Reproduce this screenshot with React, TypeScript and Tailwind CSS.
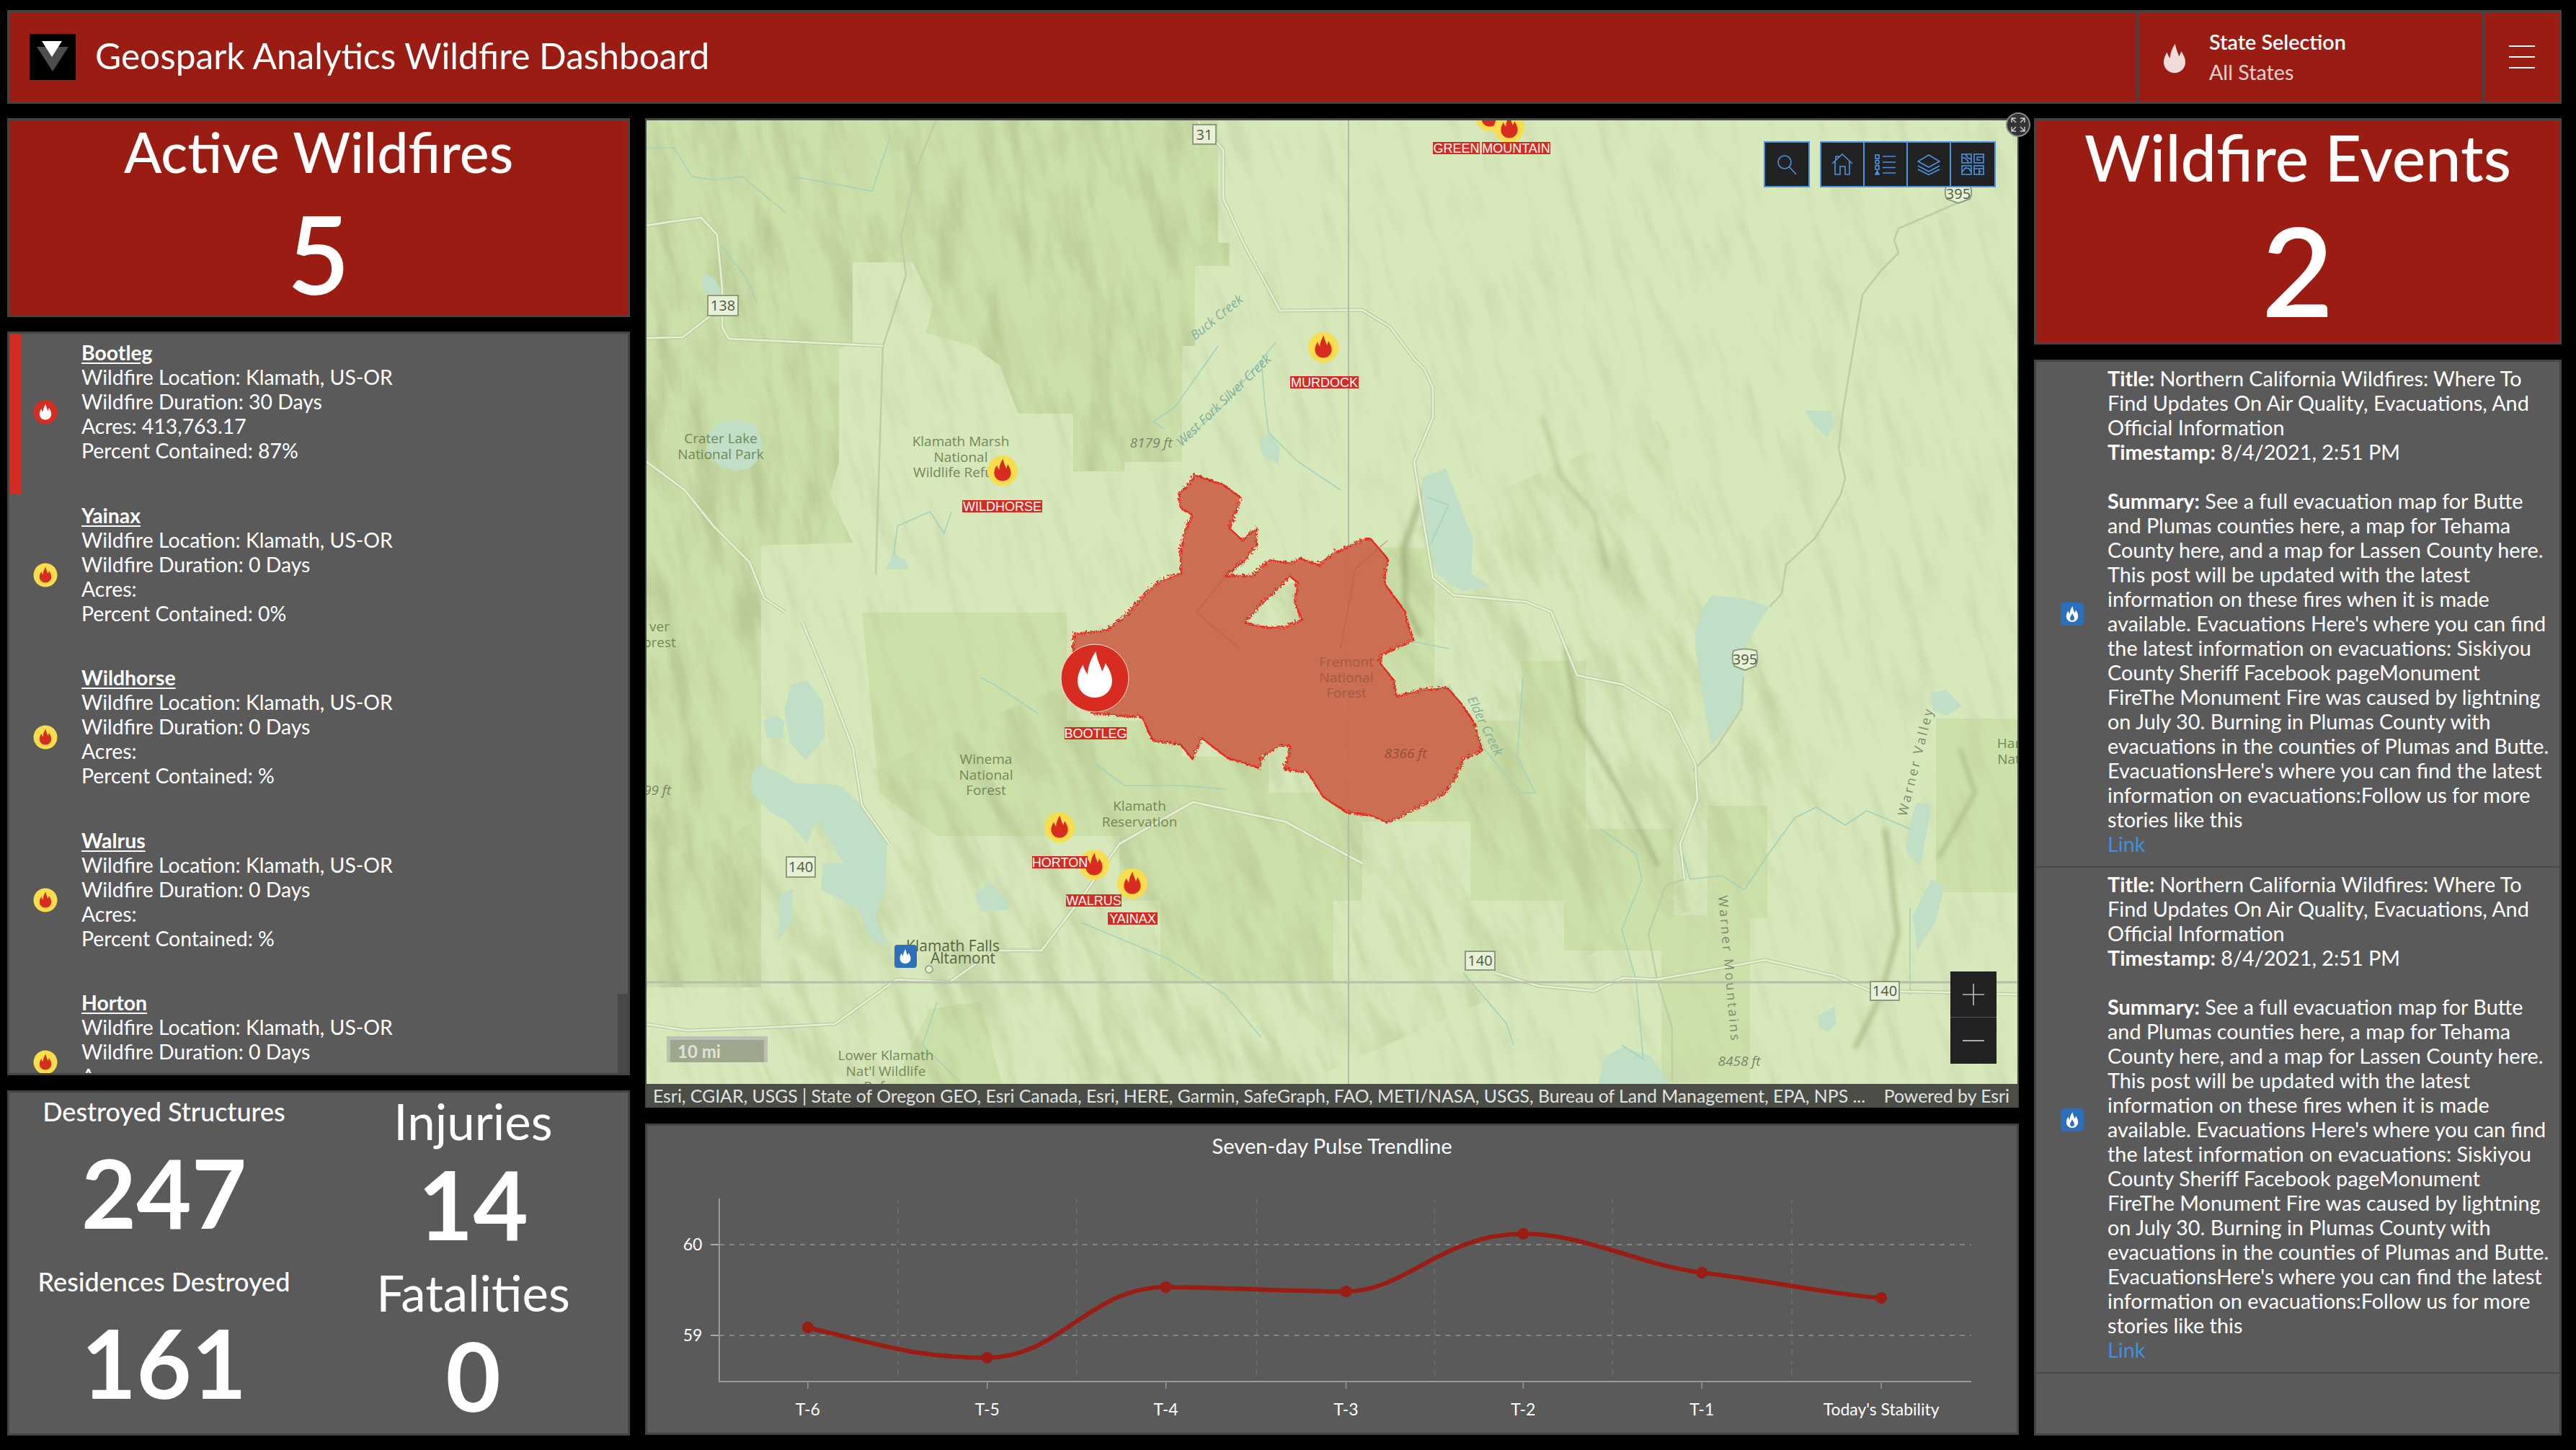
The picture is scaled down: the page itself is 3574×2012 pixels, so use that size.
import React from "react";

const FLAME =
  "M12.5 1 C13 5 14.5 7.5 15.5 10.5 C16.2 9.2 16.6 8 17 6.5 C19 9.5 20.2 12 20.2 15 C20.2 19.6 16.5 23 12 23 C7.5 23 3.8 19.6 3.8 15 C3.8 12 5 9.6 6.4 7.4 C6.8 9 7.4 10.6 8.6 11.8 C8.8 8 10 4.5 12.5 1 Z";

function Flame({ x, y, s, fill }: { x: number; y: number; s: number; fill: string }) {
  return <path d={FLAME} fill={fill} transform={`translate(${x - s / 2} ${y - s / 2}) scale(${s / 24})`} />;
}

function Marker({ x, y }: { x: number; y: number }) {
  return (
    <g>
      <circle cx={x} cy={y} r={21} fill="#f9dd4c" />
      <Flame x={x} y={y - 1} s={34} fill="#d92c20" />
    </g>
  );
}

function Tag({ x, y, w, t }: { x: number; y: number; w: number; t: string }) {
  return (
    <g>
      <rect x={x} y={y} width={w} height={17} fill="#d62b20" />
      <text x={x + w / 2} y={y + 14.5} textAnchor="middle" fontSize={18} fill="#fff" fontFamily="'Liberation Sans',sans-serif">
        {t}
      </text>
    </g>
  );
}

function Shield({ x, y, w, h, t, us }: { x: number; y: number; w: number; h: number; t: string; us?: boolean }) {
  return (
    <g>
      {us ? (
        <path
          d={`M${x + 3} ${y + 3} Q${x + w / 2} ${y - 2} ${x + w - 3} ${y + 3} Q${x + w} ${y + h * 0.5} ${x + w - 4} ${y + h - 6} Q${x + w * 0.7} ${y + h - 3} ${x + w / 2} ${y + h} Q${x + w * 0.3} ${y + h - 3} ${x + 4} ${y + h - 6} Q${x} ${y + h * 0.5} ${x + 3} ${y + 3} Z`}
          fill="#e8f0d8"
          stroke="#8e9c7c"
          strokeWidth={2}
        />
      ) : (
        <rect x={x} y={y} width={w} height={h} fill="#e8f0d8" stroke="#8e9c7c" strokeWidth={2} />
      )}
      <text x={x + w / 2} y={y + h / 2 + 7} textAnchor="middle" fontSize={20} fill="#4c5a3e" fontFamily="'Open Sans',sans-serif">
        {t}
      </text>
    </g>
  );
}

function Place({ x, y, lines, fill = "#74875a", size = 19, gap = 21.5 }: { x: number; y: number; lines: string[]; fill?: string; size?: number; gap?: number }) {
  return (
    <text textAnchor="middle" fontSize={size} fill={fill} fontFamily="'Open Sans',sans-serif">
      {lines.map((l, i) => (
        <tspan key={i} x={x} y={y + i * gap}>
          {l}
        </tspan>
      ))}
    </text>
  );
}

function Slanted({ x, y, r, t, fill = "#7fb0a0", size = 18, italic = true, spacing = 0 }: { x: number; y: number; r: number; t: string; fill?: string; size?: number; italic?: boolean; spacing?: number }) {
  return (
    <text
      transform={`translate(${x} ${y}) rotate(${r})`}
      textAnchor="middle"
      fontSize={size}
      fill={fill}
      fontStyle={italic ? "italic" : "normal"}
      letterSpacing={spacing}
      fontFamily="'Open Sans',sans-serif"
    >
      {t}
    </text>
  );
}

const lakes = [
  "M1000 586 L1025 582 L1048 590 L1058 612 L1056 634 L1040 650 L1020 654 L998 646 L980 628 L982 602 Z",
  "M973 378 L990 385 L1002 405 L1000 422 L985 415 L975 400 Z",
  "M1228 790 L1240 768 L1258 778 L1260 790 Z",
  "M1748 612 L1762 601 L1776 622 L1774 645 L1762 638 L1750 628 Z",
  "M1043 1073 L1056 1060 L1107 1087 L1164 1089 L1196 1118 L1231 1167 L1228 1234 L1215 1274 L1234 1314 L1209 1305 L1190 1261 L1139 1234 L1142 1198 L1171 1198 L1132 1136 L1120 1171 L1094 1140 L1069 1127 L1043 1100 Z",
  "M1098 950 L1120 944 L1142 975 L1145 1022 L1118 1055 L1096 1030 L1088 985 Z",
  "M1059 1000 L1075 993 L1088 1000 L1086 1024 L1064 1024 Z",
  "M1352 1240 L1375 1225 L1398 1250 L1400 1262 L1362 1265 Z",
  "M1082 1240 L1100 1234 L1098 1280 L1080 1305 Z",
  "M1973 663 L2006 650 L2044 748 L2041 797 L2067 813 L2029 820 L1994 797 L1973 721 Z",
  "M2375 826 L2422 831 L2455 842 L2430 880 L2419 904 L2419 979 L2395 1012 L2375 1033 L2368 1000 L2352 900 L2352 877 L2362 845 Z",
  "M2504 570 L2540 570 L2545 590 L2535 607 L2518 590 Z",
  "M2678 962 L2700 957 L2722 980 L2700 993 L2682 985 Z",
  "M2660 1113 L2680 1118 L2670 1170 L2665 1203 L2645 1180 L2650 1140 Z",
  "M2680 1220 L2698 1230 L2685 1280 L2660 1319 L2654 1270 Z",
  "M2217 1504 L2228 1465 L2252 1453 L2290 1465 L2317 1504 Z",
  "M2522 1410 L2545 1397 L2548 1420 L2535 1432 L2524 1425 Z",
];

const roads = [
  "M896 313 L928 308 L973 302 L995 326 L1002 400 L1002 454 L1011 470 L1225 480",
  "M896 469 L947 468 L986 438",
  "M1662 168 L1697 208 L1697 275 L1725 337 L1776 431 L1890 430 L1929 454 L1962 498 L1976 512 L1988 538 L1988 579 L1962 641 L1973 712 L1988 802 L2017 826 L2117 835 L2152 849 L2188 937 L2252 950 L2317 988 L2352 1060 L2355 1109 L2331 1171 L2337 1220",
  "M2074 1350 L2135 1368 L2211 1375 L2252 1357 L2299 1359 L2449 1332 L2545 1354 L2595 1375 L2704 1377 L2801 1380",
  "M1890 1198 L1783 1140 L1655 1113 L1553 1171 L1496 1252 L1445 1319 L1381 1319 L1317 1363 L1244 1359 L1158 1421 L1056 1426 L954 1430 L896 1421",
  "M1113 863 L1145 939 L1183 1037 L1196 1118 L1234 1171",
  "M896 640 L950 680 L990 730 L1040 780 L1060 830 L1090 850",
];

const thinRoads = [
  "M1298 168 L1273 230 L1250 329 L1257 382 L1225 480 L1215 797",
  "M2722 279 L2634 317 L2628 333 L2634 351 L2610 375 L2584 409 L2557 570 L2551 623 L2560 663 L2554 686 L2519 746 L2478 784 L2472 824 L2455 842",
  "M2419 939 L2416 984 L2381 1037 L2349 1069",
  "M2337 1220 L2311 1229 L2287 1296 L2299 1359 L2320 1426 L2320 1502",
];

const rivers = [
  "M895 205 L935 205 L960 245 L990 250 L1030 245 L1090 295",
  "M1100 245 L1210 265 L1235 190",
  "M1000 340 L1035 385 L1050 420",
  "M1690 480 L1630 565 L1600 585 L1615 595",
  "M1640 615 L1700 560 L1770 475",
  "M1750 500 L1755 560 L1760 600 L1800 640 L1860 680",
  "M1245 730 L1290 710 L1310 740 L1320 710 M1245 730 L1240 770",
  "M1520 1060 L1560 1090 L1640 1090 L1700 1095 M1440 990 L1380 950 L1360 940",
  "M2010 950 L2060 1040 L2110 1100 L2130 1100 L2105 1050 L2113 940",
  "M1960 890 L2010 900",
  "M2220 1150 L2270 1185 L2278 1220 L2250 1290 L2270 1360 L2280 1470 L2250 1450",
  "M2330 1170 L2345 1220 L2390 1215 L2420 1235",
  "M2420 1235 L2450 1190 L2490 1135 L2520 1120 L2560 1145 L2590 1125 L2650 1150",
  "M2650 1380 L2650 1260",
  "M1980 690 L2008 700 M2010 700 L1985 755",
  "M1500 1280 L1620 1330 L1700 1380 L1750 1440 M1300 1390 L1280 1450 L1330 1500",
  "M2030 1350 L2090 1420 L2100 1450",
];

function MapCanvas() {
  return (
    <svg viewBox="897 167 1902 1337" className="w-full flex-1 block" preserveAspectRatio="none">
      <defs>
        <filter id="hill" x="0" y="0" width="1" height="1">
          <feTurbulence type="fractalNoise" baseFrequency="0.03 0.007" numOctaves={5} seed={7} />
          <feColorMatrix values="0 0 0 0 0.38  0 0 0 0 0.46  0 0 0 0 0.2  3.2 0 0 0 -1.5" />
          <feGaussianBlur stdDeviation="1" />
        </filter>
        <filter id="hillLight" x="0" y="0" width="1" height="1">
          <feTurbulence type="fractalNoise" baseFrequency="0.045 0.009" numOctaves={4} seed={19} />
          <feColorMatrix values="0 0 0 0 0.5  0 0 0 0 0.58  0 0 0 0 0.32  3 0 0 0 -1.45" />
          <feGaussianBlur stdDeviation="1" />
        </filter>
        <filter id="soft">
          <feGaussianBlur stdDeviation="3" />
        </filter>
        <filter id="jag" x="-5%" y="-5%" width="110%" height="110%">
          <feTurbulence type="turbulence" baseFrequency="0.22" numOctaves={2} seed={4} />
          <feDisplacementMap in="SourceGraphic" scale="8" />
        </filter>
        <clipPath id="westClip">
          <path d="M895 164 H1690 V337 H1706 V369 H1658 V480 H1640 V641 H1560 V654 H1489 V574 H1413 L1387 507 L1349 480 L1285 462 L1295 422 L1266 364 H1183 V476 L1164 485 V641 L1151 686 L1183 753 L1056 757 V1370 H895 Z" />
        </clipPath>
      </defs>

      <rect x="895" y="164" width="1906" height="1340" fill="#d7e8bb" />

      <g fill="#cce0aa">
        <path d="M895 164 H1690 V337 H1706 V369 H1658 V480 H1640 V641 H1560 V654 H1489 V574 H1413 L1387 507 L1349 480 L1285 462 L1295 422 L1266 364 H1183 V476 L1164 485 V641 L1151 686 L1183 753 L1056 757 V1370 H895 Z" />
        <path d="M1196 850 H1480 V1000 H1640 V1050 H1760 V1100 H1890 V1250 H1850 V1363 H1610 V1250 H1553 V1160 H1300 L1220 1100 Z" />
        <path d="M1890 760 H1990 V1000 H2111 V917 H2200 V1150 H2322 V1319 H2170 V1250 H2040 V1140 H1890 Z" />
        <path d="M2369 1118 H2452 V1274 H2428 V1502 H2305 V1270 H2369 Z" />
        <path d="M2686 997 H2801 V1238 H2686 Z" />
        <path d="M1290 1400 L1360 1390 L1390 1504 H1240 Z" />
      </g>

      <g transform="rotate(-16 1850 830)">
        <rect x="500" y="-200" width="2700" height="2100" filter="url(#hillLight)" opacity="0.3" />
      </g>
      <g clipPath="url(#westClip)">
        <g transform="rotate(-8 1300 700)">
          <rect x="760" y="40" width="1100" height="1500" filter="url(#hill)" opacity="0.42" />
        </g>
      </g>
      <g transform="rotate(-24 1700 1200)" opacity="0.3">
        <rect x="1000" y="880" width="1500" height="640" filter="url(#hill)" />
      </g>
      <rect x="895" y="1504" width="1906" height="300" fill="#000" opacity="0" />

      <g fill="none" stroke="#8d9e66" strokeLinecap="round" filter="url(#soft)" opacity="0.5">
        <path d="M2140 578 L2165 660 L2211 712 L2230 790" strokeWidth="4" />
        <path d="M1975 680 L1948 760 L1950 840 L1970 880" strokeWidth="9" />
        <path d="M2616 1153 L2633 1296 L2610 1380 L2575 1452" strokeWidth="7" />
        <path d="M2172 900 L2190 1000 L2250 1100 L2300 1200" strokeWidth="7" />
        <path d="M2690 1190 L2740 1100 L2720 1040" strokeWidth="5" />
      </g>

      <g fill="#c0dfc6">
        {lakes.map((d) => (
          <path key={d} d={d} />
        ))}
      </g>
      <g fill="none" stroke="#a2d2bb" strokeWidth="1.6">
        {rivers.map((d) => (
          <path key={d} d={d} />
        ))}
      </g>
      <g fill="none" strokeLinejoin="round">
        {thinRoads.map((d) => (
          <path key={d} d={d} stroke="#bfcda6" strokeWidth="2.5" />
        ))}
        {roads.map((d) => (
          <path key={d} d={d} stroke="#bccaa2" strokeWidth="5" />
        ))}
        {roads.map((d) => (
          <path key={d + "i"} d={d} stroke="#e8f0d4" strokeWidth="2.6" />
        ))}
      </g>

      <path d="M1871 164 V1504" stroke="#b3baa7" strokeWidth="2" />
      <path d="M895 1363 H2801" stroke="#b9bdae" strokeWidth="3" />

      <Shield x={1655} y={173} w={32} h={27} t="31" />
      <Shield x={982} y={410} w={42} h={28} t="138" />
      <Shield x={2697} y={256} w={40} h={26} t="395" us />
      <Shield x={1091} y={1189} w={40} h={28} t="140" />
      <Shield x={2033} y={1320} w={41} h={26} t="140" />
      <Shield x={2402} y={900} w={38} h={30} t="395" us />
      <Shield x={2595} y={1362} w={40} h={26} t="140" />

      <Place x={1000} y={615} lines={["Crater Lake", "National Park"]} />
      <Place x={1333} y={619} lines={["Klamath Marsh", "National", "Wildlife Refuge"]} />
      <Place x={1368} y={1060} lines={["Winema", "National", "Forest"]} />
      <Place x={1581} y={1125} lines={["Klamath", "Reservation"]} />
      <Place x={1229} y={1471} lines={["Lower Klamath", "Nat'l Wildlife", "Refuge"]} />
      <Place x={1322} y={1320} lines={["Klamath Falls"]} fill="#55663f" size={21} />
      <Place x={1336} y={1337} lines={["Altamont"]} fill="#55663f" size={21} />
      <Place x={915} y={876} lines={["ver", "orest"]} />
      <Place x={2787} y={1038} lines={["Har", "Nat"]} />
      <Slanted x={1597} y={621} r={0} t="8179 ft" fill="#7a8468" size={19} />
      <Slanted x={912} y={1103} r={0} t="99 ft" fill="#7a8468" size={19} />
      <Slanted x={2413} y={1479} r={0} t="8458 ft" fill="#7a8468" size={19} />
      <Slanted x={1692} y={445} r={-39} t="Buck Creek" />
      <Slanted x={1702} y={560} r={-44} t="West Fork Silver Creek" />
      <Slanted x={2664} y={1058} r={-76} t="Warner Valley" fill="#7c8b6e" italic={false} spacing={3} />
      <Slanted x={2393} y={1345} r={85} t="Warner Mountains" fill="#7c8b6e" italic={false} spacing={3} />

      <g filter="url(#jag)">
        <path
          fillRule="evenodd"
          fill="#cb6a50"
          fillOpacity="0.97"
          stroke="#e32a1f"
          strokeWidth="2.4"
          strokeLinejoin="round"
          d="M1649 668 L1655 657 L1694 670 L1719 688 L1710 717 L1703 730 L1722 748 L1741 730 L1741 757 L1725 775 L1697 797 L1735 797 L1760 775 L1790 780 L1802 773 L1827 782 L1847 766 L1890 746 L1900 746 L1923 773 L1918 806 L1947 846 L1950 859 L1959 886 L1915 906 L1912 917 L1932 942 L1935 964 L1970 955 L2006 952 L2026 975 L2044 1002 L2054 1040 L2029 1051 L2017 1078 L2000 1100 L1959 1122 L1923 1140 L1900 1129 L1866 1125 L1834 1104 L1812 1069 L1780 1066 L1789 1033 L1773 1033 L1751 1046 L1745 1064 L1700 1049 L1665 1022 L1652 1051 L1636 1031 L1598 1026 L1582 993 L1512 988 L1486 908 L1489 877 L1534 872 L1563 850 L1585 824 L1604 806 L1636 793 L1636 762 L1642 735 L1652 712 L1636 703 L1633 683 Z M1725 862 L1745 838 L1768 818 L1788 798 L1798 806 L1794 832 L1804 858 L1780 868 L1750 868 Z"
        />
      </g>
      <path d="M1925 750 L1880 790 L1860 900 M1700 800 L1660 850 L1720 900" fill="none" stroke="#b85a42" strokeWidth="1.5" opacity="0.5" />
      <Place x={1868} y={925} lines={["Fremont", "National", "Forest"]} fill="#a35a42" />
      <Slanted x={1950} y={1052} r={0} t="8366 ft" fill="#944e3a" size={19} />
      <Slanted x={2055} y={1010} r={64} t="Elder Creek" />

      <Marker x={2067} y={161} />
      <Marker x={2094} y={177} />
      <Marker x={1836} y={482} />
      <Marker x={1391} y={653} />
      <Marker x={1470} y={1148} />
      <Marker x={1518} y={1200} />
      <Marker x={1571} y={1226} />

      <circle cx={1519} cy={941} r={47} fill="#d92c20" stroke="#f3e4dc" strokeWidth="1" />
      <Flame x={1519} y={936} s={70} fill="#fff" />

      <Tag x={1988} y={197} w={65} t="GREEN" />
      <Tag x={2056} y={197} w={95} t="MOUNTAIN" />
      <Tag x={1790} y={522} w={95} t="MURDOCK" />
      <Tag x={1335} y={694} w={111} t="WILDHORSE" />
      <Tag x={1477} y={1009} w={86} t="BOOTLEG" />
      <Tag x={1432} y={1188} w={77} t="HORTON" />
      <Tag x={1479} y={1241} w={77} t="WALRUS" />
      <Tag x={1537} y={1266} w={69} t="YAINAX" />

      <rect x="1241" y="1311" width="31" height="32" rx="4" fill="#2d6fb8" />
      <Flame x={1256} y={1327} s={22} fill="#fff" />
      <circle cx="1289" cy="1345" r="5" fill="#e6eed0" stroke="#8e9c7c" strokeWidth="1.5" />

      <path d="M925 1438 H1065 V1474 H1060 V1443 H930 V1474 H925 Z" fill="#bcc0b4" />
      <rect x="930" y="1443" width="130" height="31" fill="#8c9280" opacity="0.75" />
      <text x="940" y="1468" fontSize="24" fontWeight="700" fill="#dfe2d8" fontFamily="'Lato',sans-serif">
        10 mi
      </text>
    </svg>
  );
}

function ToolButton({ children, last }: { children: React.ReactNode; last?: boolean }) {
  return (
    <div className={`w-[60px] h-full flex items-center justify-center ${last ? "" : "border-r-2 border-[#4a94e6]"}`}>{children}</div>
  );
}

function Toolbar() {
  const s = { fill: "none", stroke: "#4a94e6", strokeWidth: 1.6 };
  return (
    <div className="absolute top-[29px] left-[1550px] flex gap-[14px]">
      <div className="w-[64px] h-[64px] bg-[#222] border-2 border-[#4a94e6] flex items-center justify-center">
        <svg width="30" height="32" viewBox="0 0 30 32" {...s}>
          <circle cx="12" cy="13" r="9" />
          <path d="M18.5 19.5 L28 30" />
        </svg>
      </div>
      <div className="h-[64px] w-[244px] bg-[#222] border-2 border-[#4a94e6] flex">
        <ToolButton>
          <svg width="30" height="30" viewBox="0 0 30 30" {...s}>
            <path d="M1 14 L15 1 L29 14 M6 10 V4 H10 V6 M5 11 V29 H12 V18 H19 V29 H25 V11" />
          </svg>
        </ToolButton>
        <ToolButton>
          <svg width="30" height="30" viewBox="0 0 30 30" {...s}>
            <rect x="1" y="2" width="5" height="5" />
            <circle cx="3.5" cy="12" r="2.6" />
            <rect x="1" y="17" width="5" height="5" />
            <path d="M3.5 24 L6 29 H1 Z" fill="#4a94e6" />
            <path d="M11 4 H29 M11 12 H29 M11 19.5 H29 M11 27 H29" />
          </svg>
        </ToolButton>
        <ToolButton>
          <svg width="32" height="30" viewBox="0 0 32 30" {...s}>
            <path d="M16 2 L31 11 L16 19 L1 11 Z M1 17 L16 25 L31 17 M1 22 L16 29.5 L31 22" />
          </svg>
        </ToolButton>
        <ToolButton last>
          <svg width="32" height="30" viewBox="0 0 32 30" {...s}>
            <rect x="1" y="1" width="13" height="12" />
            <rect x="18" y="1" width="13" height="12" />
            <rect x="1" y="17" width="13" height="12" />
            <rect x="18" y="17" width="13" height="12" />
            <path d="M1 6 H5 L9 10 L10 13 M6 1 L9 6 L14 8 M22 5 H31 M22 5 V9 H27 M1 26 L6 20 L11 21 L14 26 M18 21 H31 M25 21 V29 M25 25 H28" />
          </svg>
        </ToolButton>
      </div>
    </div>
  );
}

function ZoomControl() {
  return (
    <div className="absolute left-[1809px] top-[1181px] w-[64px] h-[128px] bg-[#222] flex flex-col">
      <div className="h-[64px] flex items-center justify-center border-b border-[#555]">
        <svg width="30" height="30" viewBox="0 0 30 30" stroke="#bdbdbd" strokeWidth="1.6">
          <path d="M0 15 H30 M15 0 V30" />
        </svg>
      </div>
      <div className="h-[64px] flex items-center justify-center">
        <svg width="30" height="4" viewBox="0 0 30 4" stroke="#bdbdbd" strokeWidth="1.8">
          <path d="M0 2 H30" />
        </svg>
      </div>
    </div>
  );
}

function MapPanel() {
  return (
    <div className="relative h-[1373px] border-t-[3px] border-l-[2px] border-r-[2px] border-[#444b3f] flex flex-col">
      <MapCanvas />
      <div className="h-[33px] shrink-0 bg-[#4b4e46] text-[#e2e2e2] text-[24.8px] flex items-center justify-between pl-[9px] pr-[11px] whitespace-nowrap">
        <span>Esri, CGIAR, USGS | State of Oregon GEO, Esri Canada, Esri, HERE, Garmin, SafeGraph, FAO, METI/NASA, USGS, Bureau of Land Management, EPA, NPS ...</span>
        <span>Powered by Esri</span>
      </div>
      <Toolbar />
      <ZoomControl />
      <div className="absolute -top-[11px] -right-[18px] w-[34px] h-[34px] rounded-full bg-[#333] border-2 border-[#8a8a8a] flex items-center justify-center">
        <svg width="20" height="20" viewBox="0 0 20 20" fill="none" stroke="#cfcfcf" strokeWidth="1.4">
          <path d="M1 7 V1 H7 M1 1 L7 7 M13 1 H19 V7 M19 1 L13 7 M1 13 V19 H7 M1 19 L7 13 M13 19 H19 V13 M19 19 L13 13" />
        </svg>
      </div>
    </div>
  );
}

function Chart() {
  const xs = [1120, 1369, 1617, 1867, 2113, 2361, 2610];
  const ys = [1842, 1884, 1786, 1792, 1712, 1766, 1801];
  const labels = ["T-6", "T-5", "T-4", "T-3", "T-2", "T-1", "Today's Stability"];
  const mids = [1245, 1493, 1743, 1990, 2237, 2486];
  return (
    <div className="h-[432px] bg-[#5a5a5a] border-[3px] border-[#444] flex flex-col">
      <div className="h-[60px] flex items-center justify-center text-[29.2px] text-white pb-[4px]">Seven-day Pulse Trendline</div>
      <svg viewBox="897 1622 1901 366" className="w-full flex-1 block">
        {mids.map((x) => (
          <path key={x} d={`M${x} 1663 V1917`} stroke="#6f6f6f" strokeWidth="1.5" strokeDasharray="7 7" />
        ))}
        <path d="M997 1727 H2735 M997 1853 H2735" stroke="#858585" strokeWidth="2" strokeDasharray="7 7" />
        <path d="M985 1727 H997 M985 1853 H997" stroke="#aaa" strokeWidth="2" />
        <path d="M997 1663 V1917 H2735" fill="none" stroke="#9a9a9a" strokeWidth="2" />
        {xs.map((x) => (
          <path key={x} d={`M${x} 1917 V1927`} stroke="#9a9a9a" strokeWidth="1.5" />
        ))}
        <g fill="#fff" fontSize="23" textAnchor="middle" fontFamily="'Lato',sans-serif">
          <text x="960" y="1735">60</text>
          <text x="960" y="1861">59</text>
          {labels.map((l, i) => (
            <text key={l} x={xs[i]} y="1964">{l}</text>
          ))}
        </g>
        <path
          d="M1120 1842 C1220 1866 1270 1884 1369 1884 C1470 1884 1510 1786 1617 1786 C1700 1786 1780 1792 1867 1792 C1950 1792 2000 1712 2113 1712 C2200 1712 2270 1754 2361 1766 C2450 1776 2530 1795 2610 1801"
          fill="none"
          stroke="#9b1c12"
          strokeWidth="6"
        />
        {xs.map((x, i) => (
          <circle key={x} cx={x} cy={ys[i]} r="8" fill="#9b1c12" />
        ))}
      </svg>
    </div>
  );
}

const fires = [
  { name: "Bootleg", dur: "30", acres: "413,763.17", pct: "87%", active: true },
  { name: "Yainax", dur: "0", acres: "", pct: "0%" },
  { name: "Wildhorse", dur: "0", acres: "", pct: "%" },
  { name: "Walrus", dur: "0", acres: "", pct: "%" },
  { name: "Horton", dur: "0", acres: "", pct: "%" },
];

function FireRow({ f }: { f: (typeof fires)[number] }) {
  return (
    <div className="relative h-[225.6px] shrink-0 flex items-start">
      {f.active && <div className="absolute left-0 top-0 w-[16px] h-[223px] bg-[#d62b20]" />}
      <div className="w-[100px] h-[218px] shrink-0 flex items-center justify-center">
        <svg width="34" height="34" viewBox="0 0 34 34">
          <circle cx="17" cy="17" r="16.5" fill={f.active ? "#d92c20" : "#f9dd4c"} />
          <path d={FLAME} transform="translate(5 4.5) scale(1)" fill={f.active ? "#fff" : "#d92c20"} />
        </svg>
      </div>
      <div className="text-[28.4px] leading-[34px] text-white pt-[9px] whitespace-nowrap">
        <div className="font-bold underline underline-offset-[3px]">{f.name}</div>
        <div>Wildfire Location: Klamath, US-OR</div>
        <div>Wildfire Duration: {f.dur} Days</div>
        <div>Acres: {f.acres}</div>
        <div>Percent Contained: {f.pct}</div>
      </div>
    </div>
  );
}

function FireList() {
  return (
    <div className="relative h-[1032px] bg-[#5a5a5a] border-[3px] border-[#444] overflow-hidden">
      <div className="flex flex-col">
        {fires.map((f) => (
          <FireRow key={f.name} f={f} />
        ))}
      </div>
      <div className="absolute right-0 bottom-0 w-[14px] h-[110px] bg-[#484848]" />
    </div>
  );
}

function Stat({ label, value, big }: { label: string; value: string; big?: boolean }) {
  return (
    <div className={`flex flex-col items-center ${big ? "h-[238px]" : "h-[236px]"}`}>
      <div className={big ? "text-[69px] leading-[80px] text-white" : "text-[36px] leading-[44px] font-medium mt-[4px] text-white"}>{label}</div>
      <div className={`text-[132px] leading-[132px] font-bold text-white ${big ? "mt-[8px]" : "mt-[24px]"}`}>{value}</div>
    </div>
  );
}

function Stats() {
  return (
    <div className="h-[479px] bg-[#5a5a5a] border-[3px] border-[#444] grid grid-cols-2">
      <div className="flex flex-col">
        <Stat label="Destroyed Structures" value="247" />
        <Stat label="Residences Destroyed" value="161" />
      </div>
      <div className="flex flex-col">
        <Stat label="Injuries" value="14" big />
        <Stat label="Fatalities" value="0" big />
      </div>
    </div>
  );
}

const summary = [
  "and Plumas counties here, a map for Tehama",
  "County here, and a map for Lassen County here.",
  "This post will be updated with the latest",
  "information on these fires when it is made",
  "available. Evacuations Here's where you can find",
  "the latest information on evacuations: Siskiyou",
  "County Sheriff Facebook pageMonument",
  "FireThe Monument Fire was caused by lightning",
  "on July 30. Burning in Plumas County with",
  "evacuations in the counties of Plumas and Butte.",
  "EvacuationsHere's where you can find the latest",
  "information on evacuations:Follow us for more",
  "stories like this",
];

function EventRow() {
  return (
    <div className="h-[702px] shrink-0 flex items-center border-b-2 border-[#484848]">
      <div className="w-[99px] shrink-0 flex justify-center">
        <div className="w-[32px] h-[32px] rounded-[5px] bg-[#2d6fb8] flex items-center justify-center">
          <svg width="24" height="24" viewBox="0 0 24 24">
            <path d={FLAME} fill="#fff" />
            <path d="M12 11 C13 14 15 15 15 18 C15 20 13.5 21 12 21 C10.5 21 9 20 9 18 C9 15.5 11 14 12 11 Z" fill="#2d6fb8" />
          </svg>
        </div>
      </div>
      <div className="text-[28.8px] leading-[34px] text-white whitespace-nowrap pb-[8px]">
        <div><b className="font-bold">Title:</b> Northern California Wildfires: Where To</div>
        <div>Find Updates On Air Quality, Evacuations, And</div>
        <div>Official Information</div>
        <div><b className="font-bold">Timestamp:</b> 8/4/2021, 2:51 PM</div>
        <div className="h-[34px]" />
        <div><b className="font-bold">Summary:</b> See a full evacuation map for Butte</div>
        {summary.map((l) => (
          <div key={l}>{l}</div>
        ))}
        <div className="text-[#3f8fe6]">Link</div>
      </div>
    </div>
  );
}

function Header() {
  return (
    <div className="h-[130px] bg-[#9a1c12] border-[3px] border-[#444] flex items-stretch text-white">
      <div className="flex-1 flex items-center pl-[28px]">
        <svg width="64" height="64" viewBox="0 0 64 64" className="shrink-0">
          <rect width="64" height="64" fill="#000" />
          <path d="M10 18 H54 L32 52 Z" fill="#4d4d4d" />
          <path d="M17 10 H45 L31 32 Z" fill="#fff" />
        </svg>
        <div className="ml-[27px] text-[49.6px] leading-none pb-[3px]">Geospark Analytics Wildfire Dashboard</div>
      </div>
      <div className="w-[480px] border-l-[3px] border-[#444] flex items-center">
        <svg width="44" height="52" viewBox="0 0 24 24" className="ml-[28px] mt-[3px]">
          <path d={FLAME} fill="#f2dcdb" />
        </svg>
        <div className="ml-[26px]">
          <div className="text-[28.7px] leading-[42px] font-semibold">State Selection</div>
          <div className="text-[28.7px] leading-[42px] text-white/80">All States</div>
        </div>
      </div>
      <div className="w-[107px] border-l-[3px] border-[#444] flex flex-col items-center justify-center gap-[13px]">
        <div className="w-[36px] h-[2px] bg-white" />
        <div className="w-[36px] h-[2px] bg-white" />
        <div className="w-[36px] h-[2px] bg-white" />
      </div>
    </div>
  );
}

export default function App() {
  return (
    <div className="w-[3574px] h-[2012px] bg-black pt-[14px] pl-[10px] pr-[20px] font-['Lato',sans-serif] overflow-hidden">
      <Header />
      <div className="flex gap-[21px] mt-[20px]">
        <div className="w-[864px] flex flex-col">
          <div className="h-[276px] bg-[#9a1c12] border-[3px] border-[#444] flex flex-col items-center text-white">
            <div className="text-[77px] leading-[90px] -mt-[2px] font-medium">Active Wildfires</div>
            <div className="text-[150px] leading-[150px] mt-[21px] font-semibold">5</div>
          </div>
          <div className="h-[20px]" />
          <FireList />
          <div className="h-[21px]" />
          <Stats />
        </div>
        <div className="w-[1906px] flex flex-col gap-[22px]">
          <MapPanel />
          <Chart />
        </div>
        <div className="w-[732px] flex flex-col gap-[21px]">
          <div className="h-[314px] bg-[#9a1c12] border-[3px] border-[#444] flex flex-col items-center text-white">
            <div className="text-[88px] leading-[100px] mt-[1px] font-medium">Wildfire Events</div>
            <div className="text-[172px] leading-[172px] mt-[20px] font-semibold">2</div>
          </div>
          <div className="h-[1493px] bg-[#5a5a5a] border-[3px] border-[#444] flex flex-col overflow-hidden">
            <EventRow />
            <EventRow />
          </div>
        </div>
      </div>
    </div>
  );
}
